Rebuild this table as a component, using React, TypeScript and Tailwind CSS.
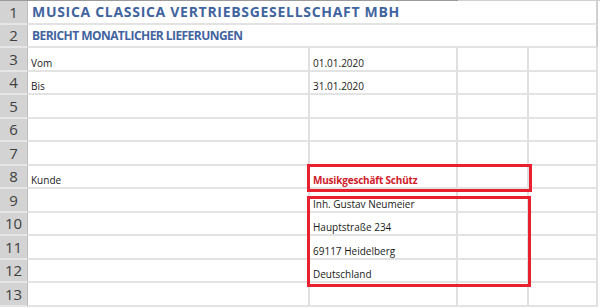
import React from "react";

const ROWS = 13;

function RowHeader({ n }: { n: number }) {
  return (
    <div className="flex h-[23.5px] items-center justify-center border-b-2 border-r border-b-[#e6e6e6] border-r-[#bdbdbd] bg-[#d3d3d3] pt-[1px] text-[15px] leading-none text-[#404040]">
      {n}
    </div>
  );
}

function Cell({
  children,
  className = "",
}: {
  children?: React.ReactNode;
  className?: string;
}) {
  return (
    <div
      className={
        "flex h-[23.5px] items-end overflow-visible whitespace-nowrap border-b-2 border-r-2 border-b-[#e3e3e3] border-r-[#e0e0e0] px-[3px] pb-[2px] text-[10px] leading-none text-[#1a1a1a] " +
        className
      }
    >
      {children}
    </div>
  );
}

export default function App() {
  const colA: Record<number, string> = { 3: "Vom", 4: "Bis", 8: "Kunde" };
  const colB: Record<number, string> = {
    3: "01.01.2020",
    4: "31.01.2020",
    9: "Inh. Gustav Neumeier",
    10: "Hauptstraße 234",
    11: "69117 Heidelberg",
    12: "Deutschland",
  };

  return (
    <div
      className="relative h-[308px] w-[600px] overflow-hidden bg-white"
      style={{ fontFamily: '"Open Sans", "Noto Sans", sans-serif' }}
    >
      <div className="flex h-px w-full">
        <div className="h-px w-[458px] bg-[#9a9a9a]" />
        <div className="h-px flex-1 bg-[#d0d0d0]" />
      </div>
      <div className="grid grid-cols-[28px_282px_148px_71px_69px_2px]">
        {Array.from({ length: ROWS }, (_, i) => {
          const n = i + 1;
          if (n === 1 || n === 2) {
            return (
              <React.Fragment key={n}>
                <RowHeader n={n} />
                <div className="col-span-4 flex h-[23.5px] items-center whitespace-nowrap border-b-2 border-r-2 border-b-[#e3e3e3] border-r-[#d0d0d0] px-[4px] pt-[1px] leading-none">
                  {n === 1 ? (
                    <span className="text-[14px] font-bold tracking-[0.7px] text-[#3f64a0]">
                      MUSICA CLASSICA VERTRIEBSGESELLSCHAFT MBH
                    </span>
                  ) : (
                    <span className="text-[12px] font-bold tracking-[-0.55px] text-[#3f64a0]">
                      BERICHT MONATLICHER LIEFERUNGEN
                    </span>
                  )}
                </div>
                <div className="h-[23.5px] bg-white" />
              </React.Fragment>
            );
          }
          return (
            <React.Fragment key={n}>
              <RowHeader n={n} />
              <Cell className="text-[9.5px]">{colA[n]}</Cell>
              <Cell className="text-[10.5px]">
                {n === 8 ? (
                  <span className="text-[10px] font-bold tracking-[-0.2px] text-[#d0202a]">
                    Musikgeschäft Schütz
                  </span>
                ) : (
                  colB[n]
                )}
              </Cell>
              <Cell />
              <Cell className="border-r-[#d0d0d0]" />
              <div className="h-[23.5px] bg-white" />
            </React.Fragment>
          );
        })}
      </div>

      <div className="pointer-events-none absolute left-[307px] top-[164px] h-[28px] w-[225px] border-[3px] border-[#e8202f]" />
      <div className="pointer-events-none absolute left-[307px] top-[196px] h-[91px] w-[224px] border-[3px] border-[#e8202f]" />
    </div>
  );
}
